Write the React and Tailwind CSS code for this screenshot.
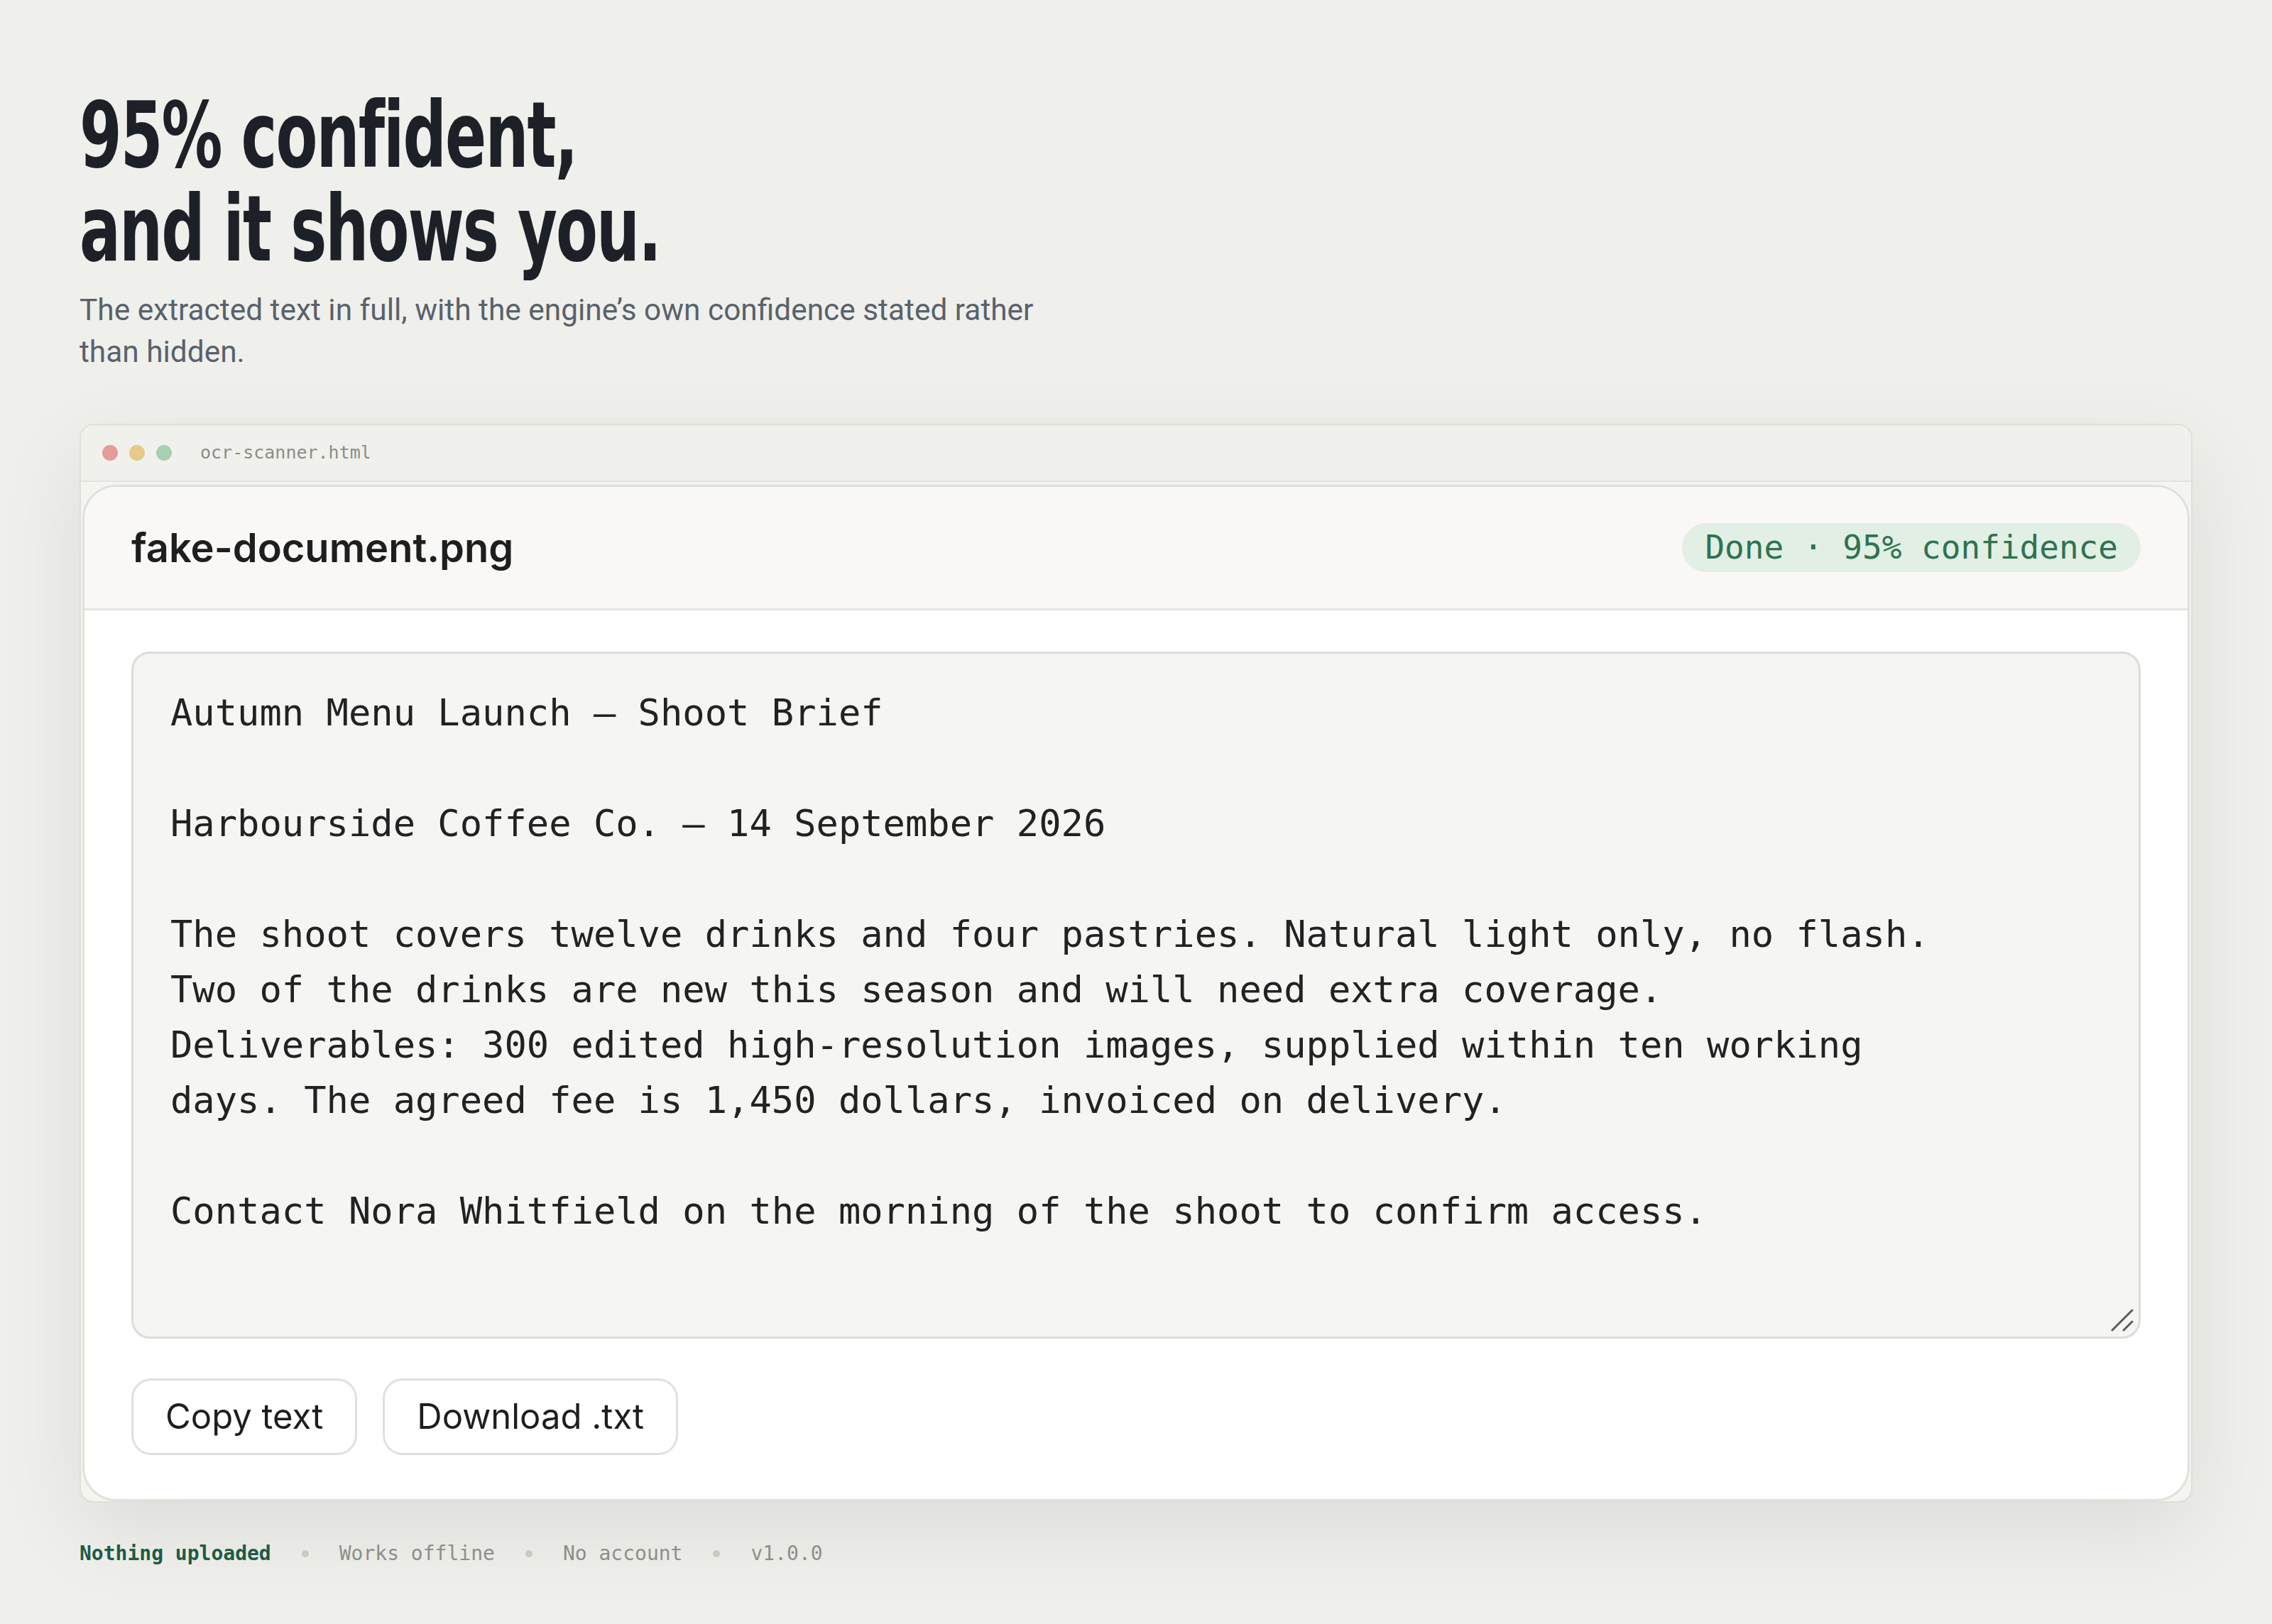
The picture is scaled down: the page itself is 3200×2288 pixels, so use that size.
import React from 'react';

const docText = `Autumn Menu Launch — Shoot Brief

Harbourside Coffee Co. – 14 September 2026

The shoot covers twelve drinks and four pastries. Natural light only, no flash.
Two of the drinks are new this season and will need extra coverage.
Deliverables: 300 edited high-resolution images, supplied within ten working
days. The agreed fee is 1,450 dollars, invoiced on delivery.

Contact Nora Whitfield on the morning of the shoot to confirm access.`;

const mono = { fontFamily: '"DejaVu Sans Mono", "Liberation Mono", monospace' };
const sans = { fontFamily: 'Inter, "Liberation Sans", sans-serif' };

const ResizeGrip = () => (
    <svg width="34" height="34" viewBox="0 0 34 34" className="absolute right-[6px] bottom-[6px]">
        <line x1="3" y1="31" x2="31" y2="3" stroke="#5b5b5b" strokeWidth="3" strokeLinecap="round" />
        <line x1="19" y1="31" x2="31" y2="19" stroke="#5b5b5b" strokeWidth="3" strokeLinecap="round" />
    </svg>
);

const Dot = () => <span className="h-[10px] w-[10px] rounded-full bg-[#c8cac4]" />;

const App = () => {
    return (
        <div className="min-h-screen w-full bg-[#eff0eb] px-[112px] pt-[125px] pb-[60px]">
            {/* Hero heading */}
            <h1
                className="origin-left scale-x-[0.745] whitespace-nowrap text-[128px] leading-[132px] font-bold tracking-[-0.02em] text-[#1d2127]"
                style={{ fontFamily: '"DejaVu Sans Condensed", "DejaVu Sans", sans-serif' }}
            >
                <span className="block">95% confident,</span>
                <span className="block">and it shows you.</span>
            </h1>
            <p
                className="mt-[18px] max-w-[1410px] text-[42.4px] leading-[59px] text-[#59626b]"
                style={{ fontFamily: 'Roboto, "Liberation Sans", sans-serif' }}
            >
                The extracted text in full, with the engine’s own confidence stated rather than hidden.
            </p>

            {/* Browser window */}
            <div className="mt-[72px] rounded-[20px] border-2 border-[#dfe0da] bg-[#f4f4f1] shadow-[0_40px_120px_rgba(0,0,0,0.08)] overflow-hidden">
                <div className="flex h-[80px] items-center gap-[40px] border-b-2 border-[#e2e3dd] bg-[#f0f1ec] px-[30px]">
                    <div className="flex gap-[16px]">
                        <span className="h-[22px] w-[22px] rounded-full bg-[#e39c99]" />
                        <span className="h-[22px] w-[22px] rounded-full bg-[#e7c98a]" />
                        <span className="h-[22px] w-[22px] rounded-full bg-[#a7cfb1]" />
                    </div>
                    <span className="text-[25px] text-[#8b8d88]" style={mono}>ocr-scanner.html</span>
                </div>

                <div className="px-[2px] pt-[4px]">
                    {/* App card */}
                    <div className="rounded-[48px] border-[3px] border-[#e0e0dc] bg-white overflow-hidden">
                        <div className="flex h-[174px] items-center justify-between border-b-[3px] border-[#e4e4e0] bg-[#f9f8f6] px-[66px]">
                            <span className="text-[56px] font-semibold text-[#1e1e1e]" style={sans}>
                                fake-document.png
                            </span>
                            <span
                                className="flex h-[69px] items-center rounded-full bg-[#e1efe5] px-[32px] text-[46px] text-[#2e7350]"
                                style={mono}
                            >
                                Done · 95% confidence
                            </span>
                        </div>

                        <div className="px-[66px] pt-[58px] pb-[62px]">
                            <div className="relative h-[968px] rounded-[26px] border-[3px] border-[#dcdcd8] bg-[#f5f5f3] px-[52px] pt-[44px]">
                                <div className="whitespace-pre text-[52.1px] leading-[78px] text-[#222222]" style={mono}>
                                    {docText}
                                </div>
                                <ResizeGrip />
                            </div>

                            <div className="mt-[56px] flex gap-[36px]" style={sans}>
                                <button className="h-[108px] rounded-[28px] border-[3px] border-[#e0e0dc] bg-white px-[45px] text-[49px] text-[#1e1e1e]">
                                    Copy text
                                </button>
                                <button className="h-[108px] rounded-[28px] border-[3px] border-[#e0e0dc] bg-white px-[45px] text-[49px] text-[#1e1e1e]">
                                    Download .txt
                                </button>
                            </div>
                        </div>
                    </div>
                </div>
            </div>

            {/* Footer */}
            <div className="mt-[52px] flex items-center gap-[43px] text-[28px] leading-[40px]" style={mono}>
                <span className="font-bold text-[#1f5a48]">Nothing uploaded</span>
                <Dot />
                <span className="text-[#8d8f8a]">Works offline</span>
                <Dot />
                <span className="text-[#8d8f8a]">No account</span>
                <Dot />
                <span className="text-[#8d8f8a]">v1.0.0</span>
            </div>
        </div>
    );
};

export default App;
